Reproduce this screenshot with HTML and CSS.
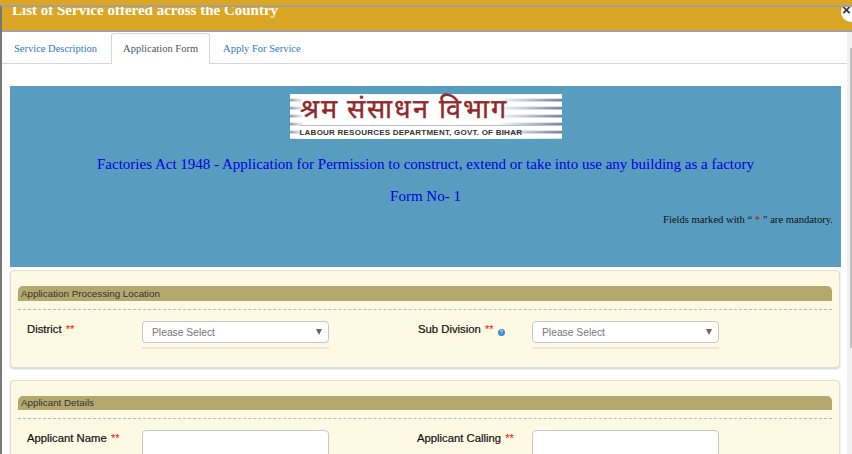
FILE: index.html
```html
<!DOCTYPE html>
<html lang="en">
<head>
    <meta charset="UTF-8">
    <title>List of Service offered across the Country</title>
    <link rel="stylesheet" href="styles.css">
</head>
<body>
    <div class="top-strip"></div>
    <div class="modal">
        <header class="modal-header">
            <h4>List of Service offered across the Country</h4>
            <span class="close-btn">&times;</span>
        </header>

        <ul class="tabs">
            <li><a href="#">Service Description</a></li>
            <li class="active"><a href="#">Application Form</a></li>
            <li><a href="#">Apply For Service</a></li>
        </ul>

        <div class="modal-body">
            <section class="form-banner">
                <div class="logo">
                    <span class="logo-hindi">श्रम संसाधन विभाग</span>
                    <span class="logo-english">LABOUR RESOURCES DEPARTMENT, GOVT. OF BIHAR</span>
                </div>
                <p class="form-title">Factories Act 1948 - Application for Permission to construct, extend or take into use any building as a factory</p>
                <p class="form-no">Form No- 1</p>
                <p class="mandatory">Fields marked with &ldquo; <span class="red">*</span> &rdquo; are mandatory.</p>
            </section>

            <section class="card card-location">
                <h5 class="card-title">Application Processing Location</h5>
                <div class="form-row">
                    <label>District <span class="req">**</span></label>
                    <div class="field">
                        <div class="select">Please Select</div>
                        <div class="field-line"></div>
                    </div>
                    <label class="second">Sub Division <span class="req">**</span> <span class="help">?</span></label>
                    <div class="field">
                        <div class="select">Please Select</div>
                        <div class="field-line"></div>
                    </div>
                </div>
            </section>

            <section class="card card-applicant">
                <h5 class="card-title">Applicant Details</h5>
                <div class="form-row">
                    <label>Applicant Name <span class="req">**</span></label>
                    <div class="field"><div class="text-input"></div></div>
                    <label class="second calling">Applicant Calling <span class="req">**</span></label>
                    <div class="field"><div class="text-input"></div></div>
                </div>
            </section>
        </div>
    </div>
    <div class="scrollbar"><div class="thumb"></div></div>
</body>
</html>
```

FILE: styles.css
```css
/* General */
html, body {
    height: 100%;
}

body {
    margin: 0;
    overflow: hidden;
    position: relative;
    background-color: #fff;
    font-family: "Liberation Serif", serif;
    color: #333;
}

.top-strip {
    height: 5px;
    background-color: #dca625;
}

.modal {
    height: 449px;
    overflow: hidden;
    border-top: 2px solid #a3a09a;
    border-left: 2px solid #777;
    box-sizing: border-box;
}

/* Header */
.modal-header {
    position: relative;
    height: 25px;
    box-sizing: border-box;
    overflow: hidden;
    margin-left: -2px;
    padding-left: 12px;
    background-color: #dca625;
    border-bottom: 2px solid #a3a09a;
}

.modal-header h4 {
    margin: 0;
    font-size: 15px;
    font-weight: bold;
    line-height: 6px;
    color: #fff;
}

.close-btn {
    position: absolute;
    top: -5px;
    right: -9px;
    width: 20px;
    height: 20px;
    border-radius: 50%;
    background-color: #fff;
    color: #333;
    font: bold 15px/16px "Liberation Sans", sans-serif;
    text-indent: 1px;
}

/* Tabs */
.tabs {
    display: flex;
    height: 32px;
    box-sizing: border-box;
    margin: 0;
    padding: 0;
    list-style: none;
    border-bottom: 1px solid #d6d6d6;
    background-color: #fff;
    font-size: 10.5px;
}

.tabs li {
    margin-top: 1px;
    margin-bottom: -1px;
    padding: 0 12px;
    line-height: 29px;
    border: 1px solid transparent;
    border-bottom: 0;
    border-radius: 3px 3px 0 0;
}

.tabs li:first-child {
    padding: 0 13px 0 11px;
}

.tabs a {
    color: #2f78bb;
    text-decoration: none;
}

.tabs .active {
    padding: 0 11px;
    background-color: #fff;
    border-color: #d6d6d6;
}

.tabs .active a {
    color: #555;
}

/* Body */
.modal-body {
    padding: 22px 11px 0 8px;
}

.form-banner {
    height: 181px;
    box-sizing: border-box;
    padding-top: 8px;
    background-color: #589cc0;
    text-align: center;
    color: #0000e0;
}

.form-banner p {
    margin: 0;
}

.logo {
    display: flex;
    flex-direction: column;
    width: 272px;
    height: 45px;
    box-sizing: border-box;
    margin: 0 auto;
    padding-left: 10px;
    text-align: left;
    background:
        linear-gradient(90deg, rgba(255,255,255,0.2) 0, #fff 14px, #fff 205px, rgba(255,255,255,0) 100%),
        repeating-linear-gradient(180deg, #fff 0, #fff 4px, #56658a 6px, #d5d9e2 8px);
}

.logo-hindi {
    height: 31px;
    font-size: 27px;
    line-height: 31px;
    letter-spacing: 2px;
    color: #93282a;
    -webkit-text-stroke: 0.4px #93282a;
    white-space: nowrap;
}

.logo-english {
    font: bold 8px/13px "Liberation Sans", sans-serif;
    letter-spacing: 0.23px;
    color: #333;
    border-top: 1px solid #b9bfd0;
    white-space: nowrap;
}

.form-title {
    padding-top: 16px;
    font-size: 15px;
    line-height: 18px;
}

.form-no {
    padding-top: 14px;
    font-size: 15px;
    line-height: 18px;
}

.form-banner .mandatory {
    padding: 8px 8px 0 0;
    text-align: right;
    font-size: 10.6px;
    line-height: 13px;
    color: #111;
}

.red {
    color: #e00000;
}

/* Cards */
.card {
    margin: 3px 1px 0 0;
    height: 98px;
    box-sizing: border-box;
    padding: 15px 7px 0;
    background-color: #fef9e3;
    border: 1px solid #ddd;
    border-radius: 4px;
    box-shadow: 0 1px 2px rgba(0,0,0,0.2);
}

.card-applicant {
    margin-top: 12px;
    height: 120px;
}

.card-title {
    margin: 0;
    padding-left: 3px;
    height: 15px;
    padding-bottom: 8px;
    border-bottom: 1px dashed #bbb;
    font: normal 9.8px/15px "Liberation Sans", sans-serif;
    color: #333;
    background: linear-gradient(#b4a86f, #b4a86f) no-repeat 0 0 / 100% 15px;
    border-radius: 5px 5px 0 0;
}

.card-applicant .card-title {
    height: 14px;
    line-height: 14px;
    background-size: 100% 14px;
}

.form-row {
    display: grid;
    grid-template-columns: 115px 187px 89px 114px 187px;
    padding: 11px 0 0 9px;
    font-family: "Liberation Sans", sans-serif;
}

.form-row label {
    font-size: 11.3px;
    line-height: 16px;
    color: #111;
    -webkit-text-stroke: 0.2px #111;
}

.form-row .second {
    grid-column: 4;
}

.form-row .calling {
    margin-left: -1px;
}

.req {
    margin-left: 1px;
    color: #f00;
    font-size: 11px;
    -webkit-text-stroke: 0;
}

.help {
    display: inline-block;
    width: 7px;
    height: 7px;
    margin-left: 1px;
    border-radius: 50%;
    background-color: #3d8fc4;
    color: #d8ecf8;
    font-size: 6px;
    line-height: 7px;
    text-align: center;
    vertical-align: -1px;
    -webkit-text-stroke: 0;
}

.select {
    position: relative;
    height: 22px;
    box-sizing: border-box;
    padding-left: 9px;
    background-color: #fff;
    border: 1px solid #c8c8c8;
    border-radius: 4px;
    font-size: 10.3px;
    line-height: 21px;
    color: #777;
}

.select::after {
    content: "";
    position: absolute;
    top: 7px;
    right: 6px;
    border-style: solid;
    border-width: 6px 3px 0;
    border-color: #666 transparent transparent;
}

.field-line {
    height: 2px;
    margin-top: 4px;
    background-color: #f6e2dc;
}

.text-input {
    height: 40px;
    box-sizing: border-box;
    background-color: #fff;
    border: 1px solid #c8c8c8;
    border-radius: 4px;
}

/* Scrollbar */
.scrollbar {
    position: absolute;
    top: 32px;
    right: 0;
    bottom: 0;
    width: 5px;
    background-color: #f1f1f1;
}

.thumb {
    margin: 16px 0 0 3px;
    height: 300px;
    background-color: #c1c1c1;
}
```
